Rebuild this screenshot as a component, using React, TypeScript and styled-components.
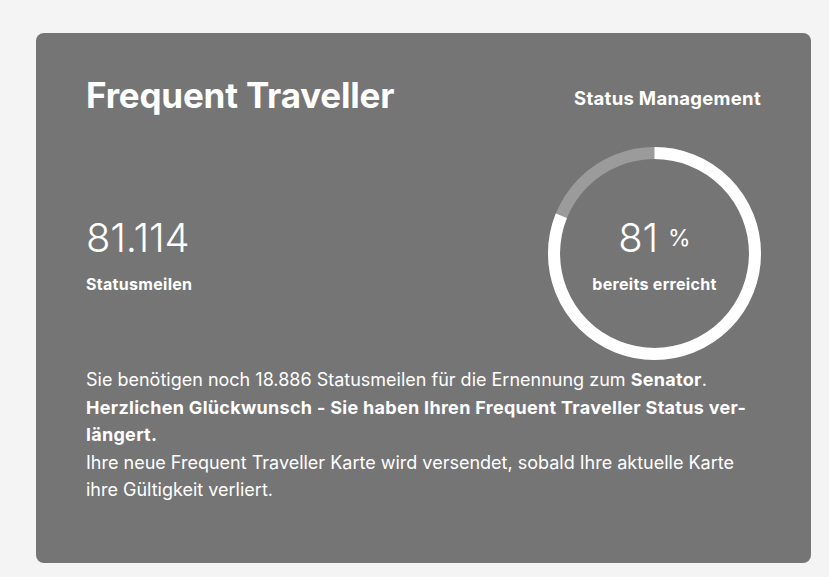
import styled, { createGlobalStyle } from "styled-components";

const GlobalStyle = createGlobalStyle`
  html, body {
    margin: 0;
    padding: 0;
    background: #f4f4f4;
  }
  body {
    font-family: Inter, "Liberation Sans", sans-serif;
    color: #fff;
  }
`;

const Page = styled.div`
  padding: 33px 18px 14px 36px;
`;

const Card = styled.section`
  width: 775px;
  height: 530px;
  box-sizing: border-box;
  background: #757575;
  border-radius: 8px;
  padding: 41px 50px 0 50px;
  display: flex;
  flex-direction: column;
`;

const Header = styled.header`
  display: flex;
  justify-content: space-between;
  align-items: flex-start;
`;

const Title = styled.h1`
  margin: 0;
  font-size: 35px;
  font-weight: 700;
  letter-spacing: -0.2px;
  line-height: 1.2;
`;

const Link = styled.span`
  margin-top: 13px;
  font-size: 18.5px;
  font-weight: 700;
  letter-spacing: 0.3px;
`;

const Middle = styled.div`
  display: flex;
  justify-content: space-between;
  align-items: center;
  margin-top: 31px;
`;

const Stat = styled.div`
  display: flex;
  flex-direction: column;
`;

const BigNumber = styled.span`
  font-size: 40px;
  font-weight: 300;
  letter-spacing: -0.2px;
  line-height: 1.2;
`;

const Label = styled.span`
  font-size: 16px;
  font-weight: 700;
  letter-spacing: 0.3px;
  margin-top: 12px;
`;

const Ring = styled.div`
  position: relative;
  width: 213px;
  height: 213px;
  display: flex;
  flex-direction: column;
  align-items: center;
  justify-content: center;
`;

const RingSvg = styled.svg`
  position: absolute;
  inset: 0;
`;

const Percent = styled.div`
  display: flex;
  align-items: baseline;
  gap: 10px;
`;

const PercentSign = styled.span`
  font-size: 23px;
  font-weight: 400;
  position: relative;
  top: -6px;
`;

const Body = styled.div`
  margin-top: 6px;
  font-size: 18px;
  line-height: 27.5px;
`;

const Line = styled.p<{ $bold?: boolean }>`
  margin: 0;
  font-weight: ${(p) => (p.$bold ? 700 : 400)};
  letter-spacing: ${(p) => (p.$bold ? "0.3px" : "0")};

  b {
    letter-spacing: 0.3px;
  }
`;

function ProgressRing({ value }: { value: number }) {
  const r = 100.5;
  const c = 2 * Math.PI * r;
  return (
    <RingSvg width="213" height="213" viewBox="0 0 213 213">
      <circle cx="106.5" cy="106.5" r={r} fill="none" stroke="#9b9b9b" strokeWidth="12" />
      <circle
        cx="106.5"
        cy="106.5"
        r={r}
        fill="none"
        stroke="#fff"
        strokeWidth="12"
        strokeDasharray={`${(c * value) / 100} ${c}`}
        transform="rotate(-90 106.5 106.5)"
      />
    </RingSvg>
  );
}

export default function App() {
  const reached = 81;
  return (
    <>
      <GlobalStyle />
      <Page>
        <Card>
          <Header>
            <Title>Frequent Traveller</Title>
            <Link>Status Management</Link>
          </Header>
          <Middle>
            <Stat>
              <BigNumber>81.114</BigNumber>
              <Label>Statusmeilen</Label>
            </Stat>
            <Ring>
              <ProgressRing value={reached} />
              <Percent>
                <BigNumber>{reached}</BigNumber>
                <PercentSign>%</PercentSign>
              </Percent>
              <Label>bereits erreicht</Label>
            </Ring>
          </Middle>
          <Body>
            <Line>
              Sie benötigen noch 18.886 Statusmeilen für die Ernennung zum <b>Senator</b>.
            </Line>
            <Line $bold>
              Herzlichen Glückwunsch - Sie haben Ihren Frequent Traveller Status ver-
              <br />
              längert.
            </Line>
            <Line>
              Ihre neue Frequent Traveller Karte wird versendet, sobald Ihre aktuelle Karte
              <br />
              ihre Gültigkeit verliert.
            </Line>
          </Body>
        </Card>
      </Page>
    </>
  );
}
